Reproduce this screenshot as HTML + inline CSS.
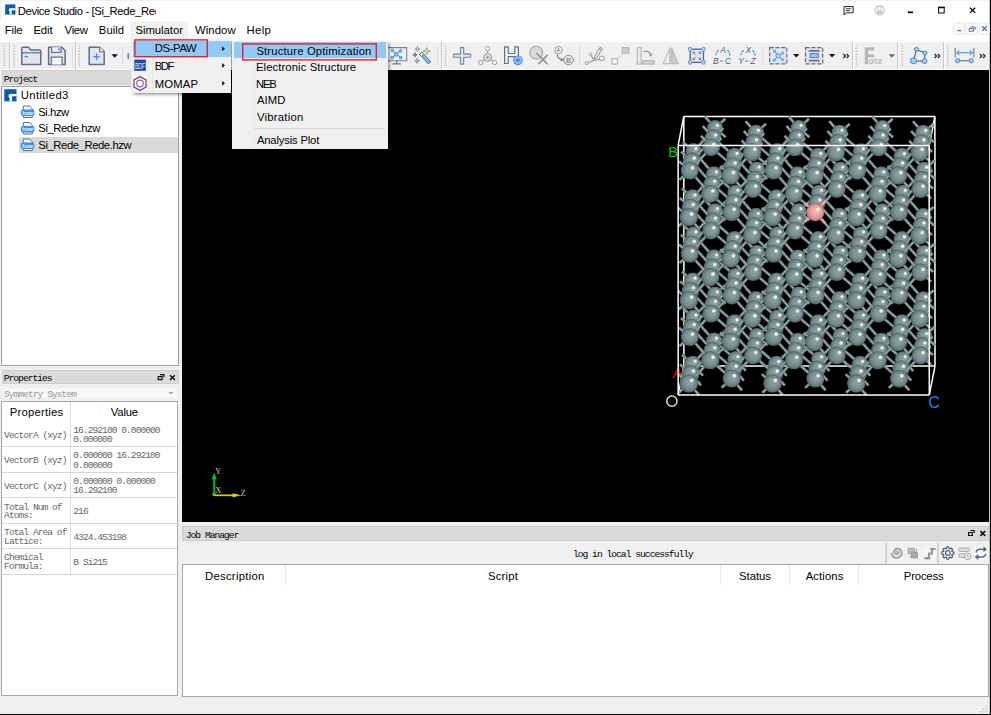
<!DOCTYPE html><html><head><meta charset="utf-8"><title>Device Studio</title><style>
*{margin:0;padding:0;box-sizing:border-box}
html,body{width:991px;height:715px;overflow:hidden;background:#f0f0f0}
body{position:relative;font-family:"Liberation Sans",sans-serif;font-size:11.3px;color:#000}
.a{position:absolute}
.t{position:absolute;white-space:nowrap;line-height:1}
.m{position:absolute;white-space:nowrap;line-height:1;font-family:"Liberation Mono",monospace;font-size:9.6px;letter-spacing:-0.96px;color:#000}
svg{position:absolute;left:0;top:0;overflow:visible}
</style></head><body>
<div class="a" style="left:0;top:0;width:990px;height:42px;background:#fff"></div>
<div class="a" style="left:130px;top:21px;width:58px;height:19px;background:#f2f2f2"></div>
<div class="a" style="left:0;top:0;width:990px;height:1px;background:#f1f1f1"></div><div class="a" style="left:0;top:0;width:1px;height:20px;background:#efefef"></div>
<div class="a" style="left:0;top:0;width:156px;height:22px;overflow:hidden"><div class="t" style="left:17.70px;top:5.60px;font-size:11.30px;letter-spacing:-0.368px;color:#000;">Device Studio - [Si_Rede_Rede</div></div>
<div class="t" style="left:4.70px;top:24.60px;font-size:11.30px;letter-spacing:-0.079px;color:#000;">File</div>
<div class="t" style="left:33.40px;top:24.60px;font-size:11.30px;letter-spacing:-0.111px;color:#000;">Edit</div>
<div class="t" style="left:64.60px;top:24.60px;font-size:11.30px;letter-spacing:-0.298px;color:#000;">View</div>
<div class="t" style="left:98.80px;top:24.60px;font-size:11.30px;letter-spacing:0.060px;color:#000;">Build</div>
<div class="t" style="left:135.49px;top:24.60px;font-size:11.30px;letter-spacing:-0.033px;color:#000;">Simulator</div>
<div class="t" style="left:195.00px;top:24.60px;font-size:11.30px;letter-spacing:0.094px;color:#000;">Window</div>
<div class="t" style="left:246.50px;top:24.60px;font-size:11.30px;letter-spacing:0.378px;color:#000;">Help</div>
<div class="a" style="left:2px;top:70px;width:176px;height:15px;background:#dadada;border:1px solid #cdcdcd"></div>
<div class="m" style="left:3.70px;top:74.95px;color:#000">Project</div>
<div class="a" style="left:1px;top:86px;width:178px;height:280px;background:#fff;border:1px solid #98a0ac"></div>
<div class="a" style="left:19px;top:137px;width:159px;height:16px;background:#d9d9d9"></div>
<div class="t" style="left:20.75px;top:89.60px;font-size:11.30px;letter-spacing:0.378px;color:#000;">Untitled3</div>
<div class="t" style="left:38.29px;top:106.60px;font-size:11.30px;letter-spacing:-0.465px;color:#000;">Si.hzw</div>
<div class="t" style="left:38.29px;top:122.60px;font-size:11.30px;letter-spacing:-0.441px;color:#000;">Si_Rede.hzw</div>
<div class="t" style="left:38.29px;top:139.60px;font-size:11.30px;letter-spacing:-0.432px;color:#000;">Si_Rede_Rede.hzw</div>
<div class="a" style="left:2px;top:370px;width:177px;height:14px;background:#dadada;border:1px solid #cfcfcf"></div>
<div class="m" style="left:3.70px;top:373.95px;color:#000">Properties</div>
<div class="a" style="left:2px;top:387px;width:176px;height:12px;background:#f8f8f8;border:1px solid #ededed;border-radius:2px"></div>
<div class="m" style="left:4.00px;top:389.95px;color:#989898">Symmetry System</div>
<div class="a" style="left:1px;top:401px;width:177px;height:295px;background:#fff;border:1px solid #a2a8b2"></div>
<div class="a" style="left:70px;top:402px;width:1px;height:172px;background:#dedede"></div>
<div class="a" style="left:2px;top:446px;width:175px;height:1px;background:#d6d6d6"></div>
<div class="a" style="left:2px;top:472px;width:175px;height:1px;background:#d6d6d6"></div>
<div class="a" style="left:2px;top:497px;width:175px;height:1px;background:#d6d6d6"></div>
<div class="a" style="left:2px;top:523px;width:175px;height:1px;background:#d6d6d6"></div>
<div class="a" style="left:2px;top:548px;width:175px;height:1px;background:#d6d6d6"></div>
<div class="a" style="left:2px;top:574px;width:175px;height:1px;background:#d6d6d6"></div>
<div class="t" style="left:9.80px;top:406.60px;font-size:11.30px;letter-spacing:0.208px;color:#000;">Properties</div>
<div class="t" style="left:110.80px;top:406.60px;font-size:11.30px;letter-spacing:-0.193px;color:#000;">Value</div>
<div class="m" style="left:4.10px;top:430.95px;color:#686868">VectorA (xyz)</div>
<div class="m" style="left:73.30px;top:425.95px;color:#686868">16.292100 0.000000</div>
<div class="m" style="left:73.30px;top:434.95px;color:#686868">0.000000</div>
<div class="m" style="left:4.10px;top:455.95px;color:#686868">VectorB (xyz)</div>
<div class="m" style="left:73.30px;top:450.95px;color:#686868">0.000000 16.292100</div>
<div class="m" style="left:73.30px;top:460.95px;color:#686868">0.000000</div>
<div class="m" style="left:4.10px;top:481.95px;color:#686868">VectorC (xyz)</div>
<div class="m" style="left:73.30px;top:476.95px;color:#686868">0.000000 0.000000</div>
<div class="m" style="left:73.30px;top:485.95px;color:#686868">16.292100</div>
<div class="m" style="left:4.10px;top:502.95px;color:#686868">Total Num of</div>
<div class="m" style="left:4.10px;top:510.95px;color:#686868">Atoms:</div>
<div class="m" style="left:73.30px;top:506.95px;color:#686868">216</div>
<div class="m" style="left:4.10px;top:527.95px;color:#686868">Total Area of</div>
<div class="m" style="left:4.10px;top:536.95px;color:#686868">Lattice:</div>
<div class="m" style="left:73.30px;top:532.95px;color:#686868">4324.453198</div>
<div class="m" style="left:4.10px;top:552.95px;color:#686868">Chemical</div>
<div class="m" style="left:4.10px;top:561.95px;color:#686868">Formula:</div>
<div class="m" style="left:73.30px;top:557.95px;color:#686868">B Si215</div>
<div class="a" style="left:0;top:68.6px;width:989px;height:1px;background:#fafafa"></div><div class="a" style="left:182.2px;top:69.5px;width:806.8px;height:452.2px;background:#000"></div>
<div class="a" style="left:182px;top:526px;width:807px;height:15px;background:#dadada;border:1px solid #cdcdcd"></div>
<div class="m" style="left:185.70px;top:530.95px;color:#000">Job Manager</div>
<div class="m" style="left:572.90px;top:549.95px;color:#000">log in local successfully</div>
<div class="a" style="left:182px;top:564px;width:807px;height:133px;background:#fff;border:1px solid #a2a8b2"></div>
<div class="a" style="left:285px;top:565px;width:1px;height:20px;background:#e8e8e8"></div>
<div class="a" style="left:720px;top:565px;width:1px;height:20px;background:#e8e8e8"></div>
<div class="a" style="left:789px;top:565px;width:1px;height:20px;background:#e8e8e8"></div>
<div class="a" style="left:858px;top:565px;width:1px;height:20px;background:#e8e8e8"></div>
<div class="t" style="left:205.00px;top:570.60px;font-size:11.30px;letter-spacing:0.278px;color:#000;">Description</div>
<div class="t" style="left:487.99px;top:570.60px;font-size:11.30px;letter-spacing:0.227px;color:#000;">Script</div>
<div class="t" style="left:739.09px;top:570.60px;font-size:11.30px;letter-spacing:-0.046px;color:#000;">Status</div>
<div class="t" style="left:805.70px;top:570.60px;font-size:11.30px;letter-spacing:0.105px;color:#000;">Actions</div>
<div class="t" style="left:903.80px;top:570.60px;font-size:11.30px;letter-spacing:-0.166px;color:#000;">Process</div>
<div class="a" style="left:989px;top:0;width:1px;height:715px;background:#c4c4c4"></div>
<div class="a" style="left:990px;top:0;width:1px;height:715px;background:#0a0a0a"></div>
<div class="a" style="left:0;top:713.7px;width:991px;height:1.3px;background:#0a0a0a"></div>
<svg width="991" height="715" viewBox="0 0 991 715">
<defs>
<radialGradient id="gs" cx="0.5" cy="0.5" r="0.5" fx="0.6" fy="0.4"><stop offset="0" stop-color="#8ea4a4"/><stop offset="0.45" stop-color="#819797"/><stop offset="0.75" stop-color="#6f8484"/><stop offset="0.92" stop-color="#586969"/><stop offset="1" stop-color="#465555"/></radialGradient>
<radialGradient id="gb" cx="0.5" cy="0.5" r="0.5" fx="0.6" fy="0.4"><stop offset="0" stop-color="#fab8b8"/><stop offset="0.45" stop-color="#f0a8a8"/><stop offset="0.75" stop-color="#dc9696"/><stop offset="0.92" stop-color="#b87a7a"/><stop offset="1" stop-color="#966060"/></radialGradient>
<radialGradient id="gh"><stop offset="0" stop-color="#fff"/><stop offset="0.35" stop-color="#fff" stop-opacity="0.95"/><stop offset="1" stop-color="#fff" stop-opacity="0"/></radialGradient>
<g id="s"><circle r="10" fill="url(#gs)"/><circle cx="3" cy="-3.2" r="2.7" fill="url(#gh)"/></g>
<g id="sb"><circle r="10" fill="url(#gb)"/><circle cx="3" cy="-3.2" r="2.7" fill="url(#gh)"/></g>
<g id="b1" fill="none"><path d="M0 0l10.70 -11.60M0 0l-10.22 9.18M0 0l-10.70 -9.20M0 0l10.23 11.62" stroke="#5d7070" stroke-width="2.9"/><path d="M0 0l10.70 -11.60M0 0l-10.22 9.18M0 0l-10.70 -9.20M0 0l10.23 11.62" stroke="#94aaaa" stroke-width="1.5"/></g>
<g id="b2" fill="none"><path d="M0 0l-10.70 11.60M0 0l10.22 -9.18M0 0l10.70 9.20M0 0l-10.23 -11.62" stroke="#5d7070" stroke-width="2.9"/><path d="M0 0l-10.70 11.60M0 0l10.22 -9.18M0 0l10.70 9.20M0 0l-10.23 -11.62" stroke="#94aaaa" stroke-width="1.5"/></g>
<g id="bb" fill="none"><path d="M0 0l10.70 -11.60M0 0l-10.22 9.18M0 0l-10.70 -9.20M0 0l10.23 11.62" stroke="#c88686" stroke-width="2.9"/><path d="M0 0l10.70 -11.60M0 0l-10.22 9.18M0 0l-10.70 -9.20M0 0l10.23 11.62" stroke="#f6b0b0" stroke-width="1.5"/></g>
</defs>
<path d="M683.9 366.0 L683.8 116.4" stroke="#fff" stroke-width="1.5" fill="none"/>
<path d="M683.9 366.0 L935.0 366.1" stroke="#fff" stroke-width="1.5" fill="none"/>
<path d="M683.8 116.4 L934.9 116.5" stroke="#fff" stroke-width="1.5" fill="none"/>
<path d="M935.0 366.1 L934.9 116.5" stroke="#fff" stroke-width="1.5" fill="none"/>
<path d="M678.2 395.0 L683.9 366.0" stroke="#fff" stroke-width="1.5" fill="none"/>
<path d="M678.1 145.4 L683.8 116.4" stroke="#fff" stroke-width="1.5" fill="none"/>
<path d="M929.3 395.1 L935.0 366.1" stroke="#fff" stroke-width="1.5" fill="none"/>
<path d="M929.2 145.5 L934.9 116.5" stroke="#fff" stroke-width="1.5" fill="none"/>
<text x="672.4" y="377.5" font-family="Liberation Sans" font-size="15.4" fill="#e60000">A</text>
<use href="#b2" x="756.9" y="336.0"/>
<use href="#s" transform="translate(756.9 336.0) scale(0.801)"/>
<use href="#b2" x="840.6" y="336.1"/>
<use href="#s" transform="translate(840.6 336.1) scale(0.801)"/>
<use href="#b2" x="924.3" y="336.1"/>
<use href="#s" transform="translate(924.3 336.1) scale(0.801)"/>
<use href="#b2" x="715.0" y="294.4"/>
<use href="#s" transform="translate(715.0 294.4) scale(0.801)"/>
<use href="#b2" x="798.7" y="294.4"/>
<use href="#s" transform="translate(798.7 294.4) scale(0.801)"/>
<use href="#b2" x="882.4" y="294.5"/>
<use href="#s" transform="translate(882.4 294.5) scale(0.801)"/>
<use href="#b2" x="756.9" y="252.8"/>
<use href="#s" transform="translate(756.9 252.8) scale(0.801)"/>
<use href="#b2" x="840.6" y="252.9"/>
<use href="#s" transform="translate(840.6 252.9) scale(0.801)"/>
<use href="#b2" x="924.3" y="252.9"/>
<use href="#s" transform="translate(924.3 252.9) scale(0.801)"/>
<use href="#b2" x="715.0" y="211.2"/>
<use href="#s" transform="translate(715.0 211.2) scale(0.801)"/>
<use href="#b2" x="798.7" y="211.2"/>
<use href="#s" transform="translate(798.7 211.2) scale(0.801)"/>
<use href="#b2" x="882.4" y="211.3"/>
<use href="#s" transform="translate(882.4 211.3) scale(0.801)"/>
<use href="#b2" x="756.8" y="169.6"/>
<use href="#s" transform="translate(756.8 169.6) scale(0.801)"/>
<use href="#b2" x="840.5" y="169.7"/>
<use href="#s" transform="translate(840.5 169.7) scale(0.801)"/>
<use href="#b2" x="924.2" y="169.7"/>
<use href="#s" transform="translate(924.2 169.7) scale(0.801)"/>
<use href="#b2" x="715.0" y="128.0"/>
<use href="#s" transform="translate(715.0 128.0) scale(0.801)"/>
<use href="#b2" x="798.7" y="128.0"/>
<use href="#s" transform="translate(798.7 128.0) scale(0.801)"/>
<use href="#b2" x="882.4" y="128.1"/>
<use href="#s" transform="translate(882.4 128.1) scale(0.801)"/>
<use href="#b1" x="735.5" y="359.2"/>
<use href="#s" transform="translate(735.5 359.2) scale(0.812)"/>
<use href="#b1" x="819.2" y="359.3"/>
<use href="#s" transform="translate(819.2 359.3) scale(0.812)"/>
<use href="#b1" x="902.9" y="359.3"/>
<use href="#s" transform="translate(902.9 359.3) scale(0.812)"/>
<use href="#b1" x="693.6" y="317.6"/>
<use href="#s" transform="translate(693.6 317.6) scale(0.812)"/>
<use href="#b1" x="777.3" y="317.6"/>
<use href="#s" transform="translate(777.3 317.6) scale(0.812)"/>
<use href="#b1" x="861.0" y="317.7"/>
<use href="#s" transform="translate(861.0 317.7) scale(0.812)"/>
<use href="#b1" x="735.5" y="276.0"/>
<use href="#s" transform="translate(735.5 276.0) scale(0.812)"/>
<use href="#b1" x="819.2" y="276.1"/>
<use href="#s" transform="translate(819.2 276.1) scale(0.812)"/>
<use href="#b1" x="902.9" y="276.1"/>
<use href="#s" transform="translate(902.9 276.1) scale(0.812)"/>
<use href="#b1" x="693.6" y="234.4"/>
<use href="#s" transform="translate(693.6 234.4) scale(0.812)"/>
<use href="#b1" x="777.3" y="234.4"/>
<use href="#s" transform="translate(777.3 234.4) scale(0.812)"/>
<use href="#b1" x="861.0" y="234.5"/>
<use href="#s" transform="translate(861.0 234.5) scale(0.812)"/>
<use href="#b1" x="735.4" y="192.8"/>
<use href="#s" transform="translate(735.4 192.8) scale(0.812)"/>
<use href="#b1" x="819.1" y="192.9"/>
<use href="#s" transform="translate(819.1 192.9) scale(0.812)"/>
<use href="#b1" x="902.8" y="192.9"/>
<use href="#s" transform="translate(902.8 192.9) scale(0.812)"/>
<use href="#b1" x="693.6" y="151.2"/>
<use href="#s" transform="translate(693.6 151.2) scale(0.812)"/>
<use href="#b1" x="777.3" y="151.2"/>
<use href="#s" transform="translate(777.3 151.2) scale(0.812)"/>
<use href="#b1" x="861.0" y="151.3"/>
<use href="#s" transform="translate(861.0 151.3) scale(0.812)"/>
<use href="#b2" x="714.1" y="340.8"/>
<use href="#s" transform="translate(714.1 340.8) scale(0.823)"/>
<use href="#b2" x="797.8" y="340.9"/>
<use href="#s" transform="translate(797.8 340.9) scale(0.823)"/>
<use href="#b2" x="881.5" y="340.9"/>
<use href="#s" transform="translate(881.5 340.9) scale(0.823)"/>
<use href="#b2" x="755.9" y="299.3"/>
<use href="#s" transform="translate(755.9 299.3) scale(0.823)"/>
<use href="#b2" x="839.6" y="299.3"/>
<use href="#s" transform="translate(839.6 299.3) scale(0.823)"/>
<use href="#b2" x="923.3" y="299.4"/>
<use href="#s" transform="translate(923.3 299.4) scale(0.823)"/>
<use href="#b2" x="714.1" y="257.6"/>
<use href="#s" transform="translate(714.1 257.6) scale(0.823)"/>
<use href="#b2" x="797.8" y="257.7"/>
<use href="#s" transform="translate(797.8 257.7) scale(0.823)"/>
<use href="#b2" x="881.5" y="257.7"/>
<use href="#s" transform="translate(881.5 257.7) scale(0.823)"/>
<use href="#b2" x="755.9" y="216.1"/>
<use href="#s" transform="translate(755.9 216.1) scale(0.823)"/>
<use href="#b2" x="839.6" y="216.1"/>
<use href="#s" transform="translate(839.6 216.1) scale(0.823)"/>
<use href="#b2" x="923.3" y="216.2"/>
<use href="#s" transform="translate(923.3 216.2) scale(0.823)"/>
<use href="#b2" x="714.0" y="174.4"/>
<use href="#s" transform="translate(714.0 174.4) scale(0.823)"/>
<use href="#b2" x="797.7" y="174.5"/>
<use href="#s" transform="translate(797.7 174.5) scale(0.823)"/>
<use href="#b2" x="881.4" y="174.5"/>
<use href="#s" transform="translate(881.4 174.5) scale(0.823)"/>
<use href="#b2" x="755.9" y="132.9"/>
<use href="#s" transform="translate(755.9 132.9) scale(0.823)"/>
<use href="#b2" x="839.6" y="132.9"/>
<use href="#s" transform="translate(839.6 132.9) scale(0.823)"/>
<use href="#b2" x="923.3" y="133.0"/>
<use href="#s" transform="translate(923.3 133.0) scale(0.823)"/>
<use href="#b1" x="692.7" y="364.0"/>
<use href="#s" transform="translate(692.7 364.0) scale(0.834)"/>
<use href="#b1" x="776.4" y="364.1"/>
<use href="#s" transform="translate(776.4 364.1) scale(0.834)"/>
<use href="#b1" x="860.1" y="364.1"/>
<use href="#s" transform="translate(860.1 364.1) scale(0.834)"/>
<use href="#b1" x="734.5" y="322.5"/>
<use href="#s" transform="translate(734.5 322.5) scale(0.834)"/>
<use href="#b1" x="818.2" y="322.5"/>
<use href="#s" transform="translate(818.2 322.5) scale(0.834)"/>
<use href="#b1" x="901.9" y="322.6"/>
<use href="#s" transform="translate(901.9 322.6) scale(0.834)"/>
<use href="#b1" x="692.7" y="280.8"/>
<use href="#s" transform="translate(692.7 280.8) scale(0.834)"/>
<use href="#b1" x="776.4" y="280.9"/>
<use href="#s" transform="translate(776.4 280.9) scale(0.834)"/>
<use href="#b1" x="860.1" y="280.9"/>
<use href="#s" transform="translate(860.1 280.9) scale(0.834)"/>
<use href="#b1" x="734.5" y="239.3"/>
<use href="#s" transform="translate(734.5 239.3) scale(0.834)"/>
<use href="#b1" x="818.2" y="239.3"/>
<use href="#s" transform="translate(818.2 239.3) scale(0.834)"/>
<use href="#b1" x="901.9" y="239.4"/>
<use href="#s" transform="translate(901.9 239.4) scale(0.834)"/>
<use href="#b1" x="692.6" y="197.6"/>
<use href="#s" transform="translate(692.6 197.6) scale(0.834)"/>
<use href="#b1" x="776.3" y="197.7"/>
<use href="#s" transform="translate(776.3 197.7) scale(0.834)"/>
<use href="#b1" x="860.0" y="197.7"/>
<use href="#s" transform="translate(860.0 197.7) scale(0.834)"/>
<use href="#b1" x="734.5" y="156.1"/>
<use href="#s" transform="translate(734.5 156.1) scale(0.834)"/>
<use href="#b1" x="818.2" y="156.1"/>
<use href="#s" transform="translate(818.2 156.1) scale(0.834)"/>
<use href="#b1" x="901.9" y="156.2"/>
<use href="#s" transform="translate(901.9 156.2) scale(0.834)"/>
<use href="#b2" x="755.0" y="345.7"/>
<use href="#s" transform="translate(755.0 345.7) scale(0.846)"/>
<use href="#b2" x="838.7" y="345.7"/>
<use href="#s" transform="translate(838.7 345.7) scale(0.846)"/>
<use href="#b2" x="922.4" y="345.8"/>
<use href="#s" transform="translate(922.4 345.8) scale(0.846)"/>
<use href="#b2" x="713.1" y="304.1"/>
<use href="#s" transform="translate(713.1 304.1) scale(0.846)"/>
<use href="#b2" x="796.8" y="304.1"/>
<use href="#s" transform="translate(796.8 304.1) scale(0.846)"/>
<use href="#b2" x="880.5" y="304.2"/>
<use href="#s" transform="translate(880.5 304.2) scale(0.846)"/>
<use href="#b2" x="755.0" y="262.5"/>
<use href="#s" transform="translate(755.0 262.5) scale(0.846)"/>
<use href="#b2" x="838.7" y="262.5"/>
<use href="#s" transform="translate(838.7 262.5) scale(0.846)"/>
<use href="#b2" x="922.4" y="262.6"/>
<use href="#s" transform="translate(922.4 262.6) scale(0.846)"/>
<use href="#b2" x="713.1" y="220.9"/>
<use href="#s" transform="translate(713.1 220.9) scale(0.846)"/>
<use href="#b2" x="796.8" y="220.9"/>
<use href="#s" transform="translate(796.8 220.9) scale(0.846)"/>
<use href="#b2" x="880.5" y="221.0"/>
<use href="#s" transform="translate(880.5 221.0) scale(0.846)"/>
<use href="#b2" x="754.9" y="179.3"/>
<use href="#s" transform="translate(754.9 179.3) scale(0.846)"/>
<use href="#b2" x="838.6" y="179.3"/>
<use href="#s" transform="translate(838.6 179.3) scale(0.846)"/>
<use href="#b2" x="922.3" y="179.4"/>
<use href="#s" transform="translate(922.3 179.4) scale(0.846)"/>
<use href="#b2" x="713.1" y="137.7"/>
<use href="#s" transform="translate(713.1 137.7) scale(0.846)"/>
<use href="#b2" x="796.8" y="137.7"/>
<use href="#s" transform="translate(796.8 137.7) scale(0.846)"/>
<use href="#b2" x="880.5" y="137.8"/>
<use href="#s" transform="translate(880.5 137.8) scale(0.846)"/>
<use href="#b1" x="733.6" y="368.9"/>
<use href="#s" transform="translate(733.6 368.9) scale(0.857)"/>
<use href="#b1" x="817.3" y="369.0"/>
<use href="#s" transform="translate(817.3 369.0) scale(0.857)"/>
<use href="#b1" x="901.0" y="369.0"/>
<use href="#s" transform="translate(901.0 369.0) scale(0.857)"/>
<use href="#b1" x="691.7" y="327.3"/>
<use href="#s" transform="translate(691.7 327.3) scale(0.857)"/>
<use href="#b1" x="775.4" y="327.3"/>
<use href="#s" transform="translate(775.4 327.3) scale(0.857)"/>
<use href="#b1" x="859.1" y="327.4"/>
<use href="#s" transform="translate(859.1 327.4) scale(0.857)"/>
<use href="#b1" x="733.6" y="285.7"/>
<use href="#s" transform="translate(733.6 285.7) scale(0.857)"/>
<use href="#b1" x="817.3" y="285.8"/>
<use href="#s" transform="translate(817.3 285.8) scale(0.857)"/>
<use href="#b1" x="901.0" y="285.8"/>
<use href="#s" transform="translate(901.0 285.8) scale(0.857)"/>
<use href="#b1" x="691.7" y="244.1"/>
<use href="#s" transform="translate(691.7 244.1) scale(0.857)"/>
<use href="#b1" x="775.4" y="244.1"/>
<use href="#s" transform="translate(775.4 244.1) scale(0.857)"/>
<use href="#b1" x="859.1" y="244.2"/>
<use href="#s" transform="translate(859.1 244.2) scale(0.857)"/>
<use href="#b1" x="733.5" y="202.5"/>
<use href="#s" transform="translate(733.5 202.5) scale(0.857)"/>
<use href="#b1" x="817.2" y="202.6"/>
<use href="#s" transform="translate(817.2 202.6) scale(0.857)"/>
<use href="#b1" x="900.9" y="202.6"/>
<use href="#s" transform="translate(900.9 202.6) scale(0.857)"/>
<use href="#b1" x="691.7" y="160.9"/>
<use href="#s" transform="translate(691.7 160.9) scale(0.857)"/>
<use href="#b1" x="775.4" y="160.9"/>
<use href="#s" transform="translate(775.4 160.9) scale(0.857)"/>
<use href="#b1" x="859.1" y="161.0"/>
<use href="#s" transform="translate(859.1 161.0) scale(0.857)"/>
<use href="#b2" x="712.2" y="350.5"/>
<use href="#s" transform="translate(712.2 350.5) scale(0.868)"/>
<use href="#b2" x="795.9" y="350.6"/>
<use href="#s" transform="translate(795.9 350.6) scale(0.868)"/>
<use href="#b2" x="879.6" y="350.6"/>
<use href="#s" transform="translate(879.6 350.6) scale(0.868)"/>
<use href="#b2" x="754.0" y="308.9"/>
<use href="#s" transform="translate(754.0 308.9) scale(0.868)"/>
<use href="#b2" x="837.7" y="309.0"/>
<use href="#s" transform="translate(837.7 309.0) scale(0.868)"/>
<use href="#b2" x="921.4" y="309.0"/>
<use href="#s" transform="translate(921.4 309.0) scale(0.868)"/>
<use href="#b2" x="712.2" y="267.3"/>
<use href="#s" transform="translate(712.2 267.3) scale(0.868)"/>
<use href="#b2" x="795.9" y="267.4"/>
<use href="#s" transform="translate(795.9 267.4) scale(0.868)"/>
<use href="#b2" x="879.6" y="267.4"/>
<use href="#s" transform="translate(879.6 267.4) scale(0.868)"/>
<use href="#b2" x="754.0" y="225.7"/>
<use href="#s" transform="translate(754.0 225.7) scale(0.868)"/>
<use href="#b2" x="837.7" y="225.8"/>
<use href="#s" transform="translate(837.7 225.8) scale(0.868)"/>
<use href="#b2" x="921.4" y="225.8"/>
<use href="#s" transform="translate(921.4 225.8) scale(0.868)"/>
<use href="#b2" x="712.1" y="184.1"/>
<use href="#s" transform="translate(712.1 184.1) scale(0.868)"/>
<use href="#b2" x="795.8" y="184.2"/>
<use href="#s" transform="translate(795.8 184.2) scale(0.868)"/>
<use href="#b2" x="879.5" y="184.2"/>
<use href="#s" transform="translate(879.5 184.2) scale(0.868)"/>
<use href="#b2" x="754.0" y="142.5"/>
<use href="#s" transform="translate(754.0 142.5) scale(0.868)"/>
<use href="#b2" x="837.7" y="142.6"/>
<use href="#s" transform="translate(837.7 142.6) scale(0.868)"/>
<use href="#b2" x="921.4" y="142.6"/>
<use href="#s" transform="translate(921.4 142.6) scale(0.868)"/>
<use href="#b1" x="690.8" y="373.7"/>
<use href="#s" transform="translate(690.8 373.7) scale(0.879)"/>
<use href="#b1" x="774.5" y="373.8"/>
<use href="#s" transform="translate(774.5 373.8) scale(0.879)"/>
<use href="#b1" x="858.2" y="373.8"/>
<use href="#s" transform="translate(858.2 373.8) scale(0.879)"/>
<use href="#b1" x="732.6" y="332.1"/>
<use href="#s" transform="translate(732.6 332.1) scale(0.879)"/>
<use href="#b1" x="816.3" y="332.2"/>
<use href="#s" transform="translate(816.3 332.2) scale(0.879)"/>
<use href="#b1" x="900.0" y="332.2"/>
<use href="#s" transform="translate(900.0 332.2) scale(0.879)"/>
<use href="#b1" x="690.8" y="290.5"/>
<use href="#s" transform="translate(690.8 290.5) scale(0.879)"/>
<use href="#b1" x="774.5" y="290.6"/>
<use href="#s" transform="translate(774.5 290.6) scale(0.879)"/>
<use href="#b1" x="858.2" y="290.6"/>
<use href="#s" transform="translate(858.2 290.6) scale(0.879)"/>
<use href="#b1" x="732.6" y="248.9"/>
<use href="#s" transform="translate(732.6 248.9) scale(0.879)"/>
<use href="#b1" x="816.3" y="249.0"/>
<use href="#s" transform="translate(816.3 249.0) scale(0.879)"/>
<use href="#b1" x="900.0" y="249.0"/>
<use href="#s" transform="translate(900.0 249.0) scale(0.879)"/>
<use href="#b1" x="690.7" y="207.3"/>
<use href="#s" transform="translate(690.7 207.3) scale(0.879)"/>
<use href="#b1" x="774.4" y="207.4"/>
<use href="#s" transform="translate(774.4 207.4) scale(0.879)"/>
<use href="#b1" x="858.1" y="207.4"/>
<use href="#s" transform="translate(858.1 207.4) scale(0.879)"/>
<use href="#b1" x="732.6" y="165.7"/>
<use href="#s" transform="translate(732.6 165.7) scale(0.879)"/>
<use href="#b1" x="816.3" y="165.8"/>
<use href="#s" transform="translate(816.3 165.8) scale(0.879)"/>
<use href="#b1" x="900.0" y="165.8"/>
<use href="#s" transform="translate(900.0 165.8) scale(0.879)"/>
<use href="#b2" x="753.1" y="355.4"/>
<use href="#s" transform="translate(753.1 355.4) scale(0.891)"/>
<use href="#b2" x="836.8" y="355.4"/>
<use href="#s" transform="translate(836.8 355.4) scale(0.891)"/>
<use href="#b2" x="920.5" y="355.5"/>
<use href="#s" transform="translate(920.5 355.5) scale(0.891)"/>
<use href="#b2" x="711.2" y="313.7"/>
<use href="#s" transform="translate(711.2 313.7) scale(0.891)"/>
<use href="#b2" x="794.9" y="313.8"/>
<use href="#s" transform="translate(794.9 313.8) scale(0.891)"/>
<use href="#b2" x="878.6" y="313.8"/>
<use href="#s" transform="translate(878.6 313.8) scale(0.891)"/>
<use href="#b2" x="753.1" y="272.2"/>
<use href="#s" transform="translate(753.1 272.2) scale(0.891)"/>
<use href="#b2" x="836.8" y="272.2"/>
<use href="#s" transform="translate(836.8 272.2) scale(0.891)"/>
<use href="#b2" x="920.5" y="272.3"/>
<use href="#s" transform="translate(920.5 272.3) scale(0.891)"/>
<use href="#b2" x="711.2" y="230.5"/>
<use href="#s" transform="translate(711.2 230.5) scale(0.891)"/>
<use href="#b2" x="794.9" y="230.6"/>
<use href="#s" transform="translate(794.9 230.6) scale(0.891)"/>
<use href="#b2" x="878.6" y="230.6"/>
<use href="#s" transform="translate(878.6 230.6) scale(0.891)"/>
<use href="#b2" x="753.0" y="189.0"/>
<use href="#s" transform="translate(753.0 189.0) scale(0.891)"/>
<use href="#b2" x="836.7" y="189.0"/>
<use href="#s" transform="translate(836.7 189.0) scale(0.891)"/>
<use href="#b2" x="920.4" y="189.1"/>
<use href="#s" transform="translate(920.4 189.1) scale(0.891)"/>
<use href="#b2" x="711.2" y="147.3"/>
<use href="#s" transform="translate(711.2 147.3) scale(0.891)"/>
<use href="#b2" x="794.9" y="147.4"/>
<use href="#s" transform="translate(794.9 147.4) scale(0.891)"/>
<use href="#b2" x="878.6" y="147.4"/>
<use href="#s" transform="translate(878.6 147.4) scale(0.891)"/>
<use href="#b1" x="731.7" y="378.6"/>
<use href="#s" transform="translate(731.7 378.6) scale(0.902)"/>
<use href="#b1" x="815.4" y="378.6"/>
<use href="#s" transform="translate(815.4 378.6) scale(0.902)"/>
<use href="#b1" x="899.1" y="378.7"/>
<use href="#s" transform="translate(899.1 378.7) scale(0.902)"/>
<use href="#b1" x="689.8" y="337.0"/>
<use href="#s" transform="translate(689.8 337.0) scale(0.902)"/>
<use href="#b1" x="773.5" y="337.0"/>
<use href="#s" transform="translate(773.5 337.0) scale(0.902)"/>
<use href="#b1" x="857.2" y="337.1"/>
<use href="#s" transform="translate(857.2 337.1) scale(0.902)"/>
<use href="#b1" x="731.7" y="295.4"/>
<use href="#s" transform="translate(731.7 295.4) scale(0.902)"/>
<use href="#b1" x="815.4" y="295.4"/>
<use href="#s" transform="translate(815.4 295.4) scale(0.902)"/>
<use href="#b1" x="899.1" y="295.5"/>
<use href="#s" transform="translate(899.1 295.5) scale(0.902)"/>
<use href="#b1" x="689.8" y="253.8"/>
<use href="#s" transform="translate(689.8 253.8) scale(0.902)"/>
<use href="#b1" x="773.5" y="253.8"/>
<use href="#s" transform="translate(773.5 253.8) scale(0.902)"/>
<use href="#b1" x="857.2" y="253.9"/>
<use href="#s" transform="translate(857.2 253.9) scale(0.902)"/>
<use href="#b1" x="731.6" y="212.2"/>
<use href="#s" transform="translate(731.6 212.2) scale(0.902)"/>
<use href="#bb" x="815.3" y="212.2"/>
<use href="#sb" transform="translate(815.3 212.2) scale(0.902)"/>
<use href="#b1" x="899.0" y="212.3"/>
<use href="#s" transform="translate(899.0 212.3) scale(0.902)"/>
<use href="#b1" x="689.8" y="170.6"/>
<use href="#s" transform="translate(689.8 170.6) scale(0.902)"/>
<use href="#b1" x="773.5" y="170.6"/>
<use href="#s" transform="translate(773.5 170.6) scale(0.902)"/>
<use href="#b1" x="857.2" y="170.7"/>
<use href="#s" transform="translate(857.2 170.7) scale(0.902)"/>
<use href="#b2" x="710.3" y="360.2"/>
<use href="#s" transform="translate(710.3 360.2) scale(0.913)"/>
<use href="#b2" x="794.0" y="360.2"/>
<use href="#s" transform="translate(794.0 360.2) scale(0.913)"/>
<use href="#b2" x="877.7" y="360.3"/>
<use href="#s" transform="translate(877.7 360.3) scale(0.913)"/>
<use href="#b2" x="752.1" y="318.6"/>
<use href="#s" transform="translate(752.1 318.6) scale(0.913)"/>
<use href="#b2" x="835.8" y="318.7"/>
<use href="#s" transform="translate(835.8 318.7) scale(0.913)"/>
<use href="#b2" x="919.5" y="318.7"/>
<use href="#s" transform="translate(919.5 318.7) scale(0.913)"/>
<use href="#b2" x="710.3" y="277.0"/>
<use href="#s" transform="translate(710.3 277.0) scale(0.913)"/>
<use href="#b2" x="794.0" y="277.0"/>
<use href="#s" transform="translate(794.0 277.0) scale(0.913)"/>
<use href="#b2" x="877.7" y="277.1"/>
<use href="#s" transform="translate(877.7 277.1) scale(0.913)"/>
<use href="#b2" x="752.1" y="235.4"/>
<use href="#s" transform="translate(752.1 235.4) scale(0.913)"/>
<use href="#b2" x="835.8" y="235.5"/>
<use href="#s" transform="translate(835.8 235.5) scale(0.913)"/>
<use href="#b2" x="919.5" y="235.5"/>
<use href="#s" transform="translate(919.5 235.5) scale(0.913)"/>
<use href="#b2" x="710.2" y="193.8"/>
<use href="#s" transform="translate(710.2 193.8) scale(0.913)"/>
<use href="#b2" x="793.9" y="193.8"/>
<use href="#s" transform="translate(793.9 193.8) scale(0.913)"/>
<use href="#b2" x="877.6" y="193.9"/>
<use href="#s" transform="translate(877.6 193.9) scale(0.913)"/>
<use href="#b2" x="752.1" y="152.2"/>
<use href="#s" transform="translate(752.1 152.2) scale(0.913)"/>
<use href="#b2" x="835.8" y="152.3"/>
<use href="#s" transform="translate(835.8 152.3) scale(0.913)"/>
<use href="#b2" x="919.5" y="152.3"/>
<use href="#s" transform="translate(919.5 152.3) scale(0.913)"/>
<use href="#b1" x="688.9" y="383.4"/>
<use href="#s" transform="translate(688.9 383.4) scale(0.924)"/>
<use href="#b1" x="772.6" y="383.4"/>
<use href="#s" transform="translate(772.6 383.4) scale(0.924)"/>
<use href="#b1" x="856.3" y="383.5"/>
<use href="#s" transform="translate(856.3 383.5) scale(0.924)"/>
<use href="#b1" x="730.7" y="341.8"/>
<use href="#s" transform="translate(730.7 341.8) scale(0.924)"/>
<use href="#b1" x="814.4" y="341.9"/>
<use href="#s" transform="translate(814.4 341.9) scale(0.924)"/>
<use href="#b1" x="898.1" y="341.9"/>
<use href="#s" transform="translate(898.1 341.9) scale(0.924)"/>
<use href="#b1" x="688.9" y="300.2"/>
<use href="#s" transform="translate(688.9 300.2) scale(0.924)"/>
<use href="#b1" x="772.6" y="300.2"/>
<use href="#s" transform="translate(772.6 300.2) scale(0.924)"/>
<use href="#b1" x="856.3" y="300.3"/>
<use href="#s" transform="translate(856.3 300.3) scale(0.924)"/>
<use href="#b1" x="730.7" y="258.6"/>
<use href="#s" transform="translate(730.7 258.6) scale(0.924)"/>
<use href="#b1" x="814.4" y="258.7"/>
<use href="#s" transform="translate(814.4 258.7) scale(0.924)"/>
<use href="#b1" x="898.1" y="258.7"/>
<use href="#s" transform="translate(898.1 258.7) scale(0.924)"/>
<use href="#b1" x="688.8" y="217.0"/>
<use href="#s" transform="translate(688.8 217.0) scale(0.924)"/>
<use href="#b1" x="772.5" y="217.0"/>
<use href="#s" transform="translate(772.5 217.0) scale(0.924)"/>
<use href="#b1" x="856.2" y="217.1"/>
<use href="#s" transform="translate(856.2 217.1) scale(0.924)"/>
<use href="#b1" x="730.7" y="175.4"/>
<use href="#s" transform="translate(730.7 175.4) scale(0.924)"/>
<use href="#b1" x="814.4" y="175.5"/>
<use href="#s" transform="translate(814.4 175.5) scale(0.924)"/>
<use href="#b1" x="898.1" y="175.5"/>
<use href="#s" transform="translate(898.1 175.5) scale(0.924)"/>
<path d="M678.2 395.0 L678.1 145.4" stroke="#fff" stroke-width="1.5" fill="none"/>
<path d="M678.2 395.0 L929.3 395.1" stroke="#fff" stroke-width="1.5" fill="none"/>
<path d="M678.1 145.4 L929.2 145.5" stroke="#fff" stroke-width="1.5" fill="none"/>
<path d="M929.3 395.1 L929.2 145.5" stroke="#fff" stroke-width="1.5" fill="none"/>
<text x="668.2" y="156.7" font-family="Liberation Sans" font-size="14.5" fill="#00c400">B</text>
<text x="928.4" y="407.7" font-family="Liberation Sans" font-size="15.8" fill="#1888f0">C</text>
<circle cx="671.9" cy="401.2" r="5.1" fill="none" stroke="#dcdcdc" stroke-width="1.5"/>
<circle cx="214" cy="494.2" r="1.5" fill="#ccc"/>
<path d="M214.3 495V478.5" stroke="#00c800" stroke-width="2"/><path d="M211.9 479.3l2.4-6.8 2.4 6.8z" fill="#00c800"/>
<path d="M214.5 495.3H233" stroke="#d8d000" stroke-width="1.7"/><path d="M232.6 493.2l8.4 2.1-8.4 2.1z" fill="#e0d800"/>
<text x="214.9" y="474" font-family="Liberation Serif" font-size="8.6" fill="#c8c8c8">Y</text>
<text x="240.6" y="495.7" font-family="Liberation Serif" font-size="8.6" fill="#c8c8c8">Z</text>
<text x="215.3" y="492.8" font-family="Liberation Serif" font-size="8.6" fill="#c8c8c8">X</text>
<path d="M3.5 46.0h1.6M3.5 48.8h1.6M3.5 51.5h1.6M3.5 54.3h1.6M3.5 57.1h1.6M3.5 59.9h1.6M3.5 62.6h1.6M3.5 65.4h1.6" stroke="#bcbcbc" stroke-width="1.2"/>
<path d="M9.5 42V69" stroke="#c8c8c8" stroke-width="1"/><path d="M10.5 42V69" stroke="#fcfcfc" stroke-width="1"/>
<path d="M13.4 46.0h1.6M13.4 48.8h1.6M13.4 51.5h1.6M13.4 54.3h1.6M13.4 57.1h1.6M13.4 59.9h1.6M13.4 62.6h1.6M13.4 65.4h1.6" stroke="#bcbcbc" stroke-width="1.2"/>
<path d="M21.8 64.5V48.3q0-1 1-1H28.6l2.2 2.7H39.8q1 0 1 1V64.5z" fill="#e3e6ec" stroke="#5f6f88" stroke-width="1.5" stroke-linejoin="round"/>
<path d="M21.8 52.8H40.8" stroke="#5f6f88" stroke-width="1.2"/>
<path d="M24.5 56.6h3.6" stroke="#4a90e2" stroke-width="1.5"/>
<path d="M48.6 64.5V47.2H61.8l3.3 3.3V64.5z" fill="#e3e6ec" stroke="#5f6f88" stroke-width="1.5" stroke-linejoin="round"/>
<path d="M51.6 47.2v5.2h9.4v-5.2M51.3 64.5v-7.4h10.8v7.4" fill="#f6f7f9" stroke="#5f6f88" stroke-width="1.2"/>
<rect x="57.8" y="48.5" width="1.8" height="2" fill="#4a90e2"/>
<path d="M72.5 45.5V65.5" stroke="#dedede" stroke-width="1"/>
<path d="M75.5 42V69" stroke="#c8c8c8" stroke-width="1"/><path d="M76.5 42V69" stroke="#fcfcfc" stroke-width="1"/>
<path d="M78.5 46.0h1.6M78.5 48.8h1.6M78.5 51.5h1.6M78.5 54.3h1.6M78.5 57.1h1.6M78.5 59.9h1.6M78.5 62.6h1.6M78.5 65.4h1.6" stroke="#bcbcbc" stroke-width="1.2"/>
<path d="M89.2 64.5V47.2H99.6l4.6 4.6V64.5z" fill="#e3e6ec" stroke="#5f6f88" stroke-width="1.5" stroke-linejoin="round"/>
<path d="M99.6 47.2v4.6h4.6" fill="#fff" stroke="#5f6f88" stroke-width="1.1" stroke-linejoin="round"/>
<path d="M93.3 56.8h6.6M96.6 53.5v6.6" stroke="#4a90e2" stroke-width="1.5"/>
<path d="M111.5 54.3h6.4l-3.2 3.4z" fill="#111"/>
<path d="M122.5 45.5V65.5" stroke="#dedede" stroke-width="1"/>
<rect x="127.5" y="53" width="1.6" height="6" fill="#4a90e2"/>
<path d="M388 47.6H406.7V60.8H388" fill="#f1f2f4" stroke="#74819a" stroke-width="1.05"/>
<path d="M396.7 60.8V63.9M392.4 63.9H400.9" stroke="#5f6f88" stroke-width="1.1"/>
<path d="M392.6 50.6L400.6 57.6M400.4 50.9L392.2 57.6" stroke="#4a90e2" stroke-width="1"/>
<circle cx="396.2" cy="54.4" r="1.9" fill="#8cc0f4" stroke="#3f7fd0" stroke-width="0.9"/>
<circle cx="392.6" cy="50.6" r="1.3" fill="#8cc0f4" stroke="#3f7fd0" stroke-width="0.9"/>
<circle cx="400.5" cy="50.9" r="1.3" fill="#8cc0f4" stroke="#3f7fd0" stroke-width="0.9"/>
<circle cx="392.2" cy="57.6" r="1.3" fill="#8cc0f4" stroke="#3f7fd0" stroke-width="0.9"/>
<circle cx="400.7" cy="57.6" r="1.3" fill="#8cc0f4" stroke="#3f7fd0" stroke-width="0.9"/>
<path d="M419.6 54.4l2.3-2.3 8.8 9.6-2.3 2.3z" fill="#7fb4f0" stroke="#5f6f88" stroke-width="1" stroke-linejoin="round"/>
<path d="M419.6 54.4l2.3-2.3 2 2.1-2.3 2.3z" fill="#fff" stroke="#5f6f88" stroke-width="1" stroke-linejoin="round"/>
<path d="M426.8 47.5L427.7 50.2L430.4 51.1L427.7 52.0L426.8 54.7L425.9 52.0L423.2 51.1L425.9 50.2z" fill="#f4ea98" stroke="#6a7488" stroke-width="0.6"/>
<path d="M417.5 46.4L418.1 48.5L420.2 49.1L418.1 49.7L417.5 51.8L416.9 49.7L414.8 49.1L416.9 48.5z" fill="#cfe0f4" stroke="#5c6c88" stroke-width="0.6"/>
<path d="M415.0 52.5L415.6 54.2L417.3 54.8L415.6 55.4L415.0 57.1L414.4 55.4L412.7 54.8L414.4 54.2z" fill="#8a78b0" stroke="#5a5078" stroke-width="0.6"/>
<path d="M417.1 58.1L417.7 60.2L419.8 60.8L417.7 61.4L417.1 63.5L416.5 61.4L414.4 60.8L416.5 60.2z" fill="#a6d8cc" stroke="#5c7c84" stroke-width="0.6"/>
<path d="M437.5 45.5V65.5" stroke="#dedede" stroke-width="1"/>
<path d="M441.5 42V69" stroke="#c8c8c8" stroke-width="1"/><path d="M442.5 42V69" stroke="#fcfcfc" stroke-width="1"/>
<path d="M444.6 46.0h1.6M444.6 48.8h1.6M444.6 51.5h1.6M444.6 54.3h1.6M444.6 57.1h1.6M444.6 59.9h1.6M444.6 62.6h1.6M444.6 65.4h1.6" stroke="#bcbcbc" stroke-width="1.2"/>
<path d="M460.5 47.6h3.2v6.5h6.9v3.2h-6.9v6.8h-3.2v-6.8h-6.9v-3.2h6.9z" fill="#e3e6ec" stroke="#7485a0" stroke-width="1.1" stroke-linejoin="round"/>
<path d="M487.7 53.5V50.9M484.4 59.6L482.2 61.4M491 59.6L493.2 61.4" stroke="#9a9a9a" stroke-width="1"/>
<circle cx="487.7" cy="57.5" r="4" fill="#dedede" stroke="#9a9a9a" stroke-width="1"/>
<path d="M485.9 57.5h3.6M487.7 55.7v3.6" stroke="#9a9a9a" stroke-width="0.9"/>
<circle cx="487.7" cy="48.7" r="2.1" fill="#fff" stroke="#9a9a9a" stroke-width="1"/>
<circle cx="480.7" cy="62.5" r="2.1" fill="#fff" stroke="#9a9a9a" stroke-width="1"/>
<circle cx="494.6" cy="62.5" r="2.1" fill="#fff" stroke="#9a9a9a" stroke-width="1"/>
<path d="M504.6 46.9h3.6v6.6h6.6v-6.6h3.6v16.6h-3.6v-6.8h-6.6v6.8h-3.6z" fill="#f4f6f9" stroke="#5f6f88" stroke-width="1.2" stroke-linejoin="round"/>
<circle cx="518" cy="60.3" r="4.3" fill="#8cc0f6" stroke="#4a90e2" stroke-width="1.1"/>
<path d="M515.8 60.3h4.4M518 58.1v4.4" stroke="#2f6fc4" stroke-width="1.1"/>
<circle cx="536.2" cy="52.8" r="6.5" fill="#d9d9d9" stroke="#a8a8a8" stroke-width="1.1"/>
<path d="M536.6 53.2L547.6 64.2M547.6 54.9L538.2 64.2" stroke="#8c8c8c" stroke-width="1.5"/>
<circle cx="558.6" cy="50.2" r="3.7" fill="#f6f6f6" stroke="#8e8e8e" stroke-width="0.9"/>
<text x="556.5" y="52.3" font-family="Liberation Sans" font-size="5.6" fill="#666">A</text>
<circle cx="568.6" cy="60" r="4.8" fill="#e4e4e4" stroke="#8e8e8e" stroke-width="1"/>
<text x="566" y="62.8" font-family="Liberation Sans" font-size="7.6" fill="#777">B</text>
<path d="M557.4 54.6Q557.6 59.2 562 59.8" fill="none" stroke="#777" stroke-width="1.1"/><path d="M560.8 57.9l2.6 2-3 1.2" fill="none" stroke="#777" stroke-width="1"/>
<path d="M579.5 45.5V65.5" stroke="#dedede" stroke-width="1"/>
<path d="M586.7 63.1L594 60.5L601.6 58.5M590.8 54.6L594 60.5" stroke="#8c8c8c" stroke-width="1" fill="none"/>
<path d="M593.6 59.6l1.2-3.4 5.3-9 2.3 1.4-5.3 9z" fill="#e6e6e6" stroke="#8c8c8c" stroke-width="0.9" stroke-linejoin="round"/>
<path d="M599.2 48.6l2.3 1.4" stroke="#8c8c8c" stroke-width="0.9"/>
<circle cx="586.7" cy="63.1" r="1.5" fill="#fff" stroke="#8c8c8c" stroke-width="0.9"/>
<circle cx="601.9" cy="58.4" r="2.4" fill="#fff" stroke="#8c8c8c" stroke-width="0.9"/>
<circle cx="590.7" cy="54.5" r="1.3" fill="#fff" stroke="#8c8c8c" stroke-width="0.9"/>
<rect x="611.8" y="58.9" width="5.6" height="5.2" fill="#fafafa" stroke="#b0b0b0" stroke-width="1.1"/>
<rect x="622.3" y="47.6" width="6.5" height="5.6" fill="#cfcfcf" stroke="#b0b0b0" stroke-width="1"/>
<path d="M618 58.3L621.5 54.6" stroke="#aaa" stroke-width="1" stroke-dasharray="1.2 1"/>
<rect x="637.3" y="47.7" width="3.8" height="16.4" fill="#ececec" stroke="#b0b0b0" stroke-width="1"/>
<rect x="642.6" y="60.7" width="11.6" height="3.4" fill="#d2d2d2" stroke="#b0b0b0" stroke-width="1"/>
<path d="M643.5 51.6Q649.5 50 650.8 55.6" fill="none" stroke="#8c8c8c" stroke-width="1.1"/><path d="M648.8 54.2l2.1 2 1.5-2.6" fill="none" stroke="#8c8c8c" stroke-width="1"/>
<path d="M669.8 48.4L663.3 63.8H669.8z" fill="#f2f2f2" stroke="#b0b0b0" stroke-width="1" stroke-linejoin="round"/>
<path d="M671.8 48.4L678.3 63.8H671.8z" fill="#cfcfcf" stroke="#b0b0b0" stroke-width="1" stroke-linejoin="round"/>
<path d="M670.8 47V65" stroke="#b8b8b8" stroke-width="1" stroke-dasharray="2 1"/>
<rect x="690.2" y="49.2" width="13.3" height="13.2" fill="#e3e6ec" stroke="#55637c" stroke-width="1.3"/>
<path d="M695.6 54.5l-2.4-2.4m0 1.8v-1.8h1.8M698.2 54.5l2.4-2.4m0 1.8v-1.8h-1.8M695.6 57.2l-2.4 2.4m0-1.8v1.8h1.8M698.2 57.2l2.4 2.4m0-1.8v1.8h-1.8" stroke="#55637c" stroke-width="0.8" fill="none"/>
<circle cx="690.2" cy="49.2" r="1.9" fill="#b9d8fa" stroke="#4a90e2" stroke-width="0.9"/>
<circle cx="703.5" cy="49.2" r="1.9" fill="#b9d8fa" stroke="#4a90e2" stroke-width="0.9"/>
<circle cx="690.2" cy="62.4" r="1.9" fill="#b9d8fa" stroke="#4a90e2" stroke-width="0.9"/>
<circle cx="703.5" cy="62.4" r="1.9" fill="#b9d8fa" stroke="#4a90e2" stroke-width="0.9"/>
<text x="720.3" y="53.3" font-family="Liberation Sans" font-style="italic" font-size="8.4" fill="#4c5a70">A</text><text x="713" y="64" font-family="Liberation Sans" font-style="italic" font-size="8.4" fill="#4c5a70">B</text><text x="725" y="64" font-family="Liberation Sans" font-style="italic" font-size="8.4" fill="#4c5a70">C</text>
<path d="M718.6 50.2Q716 52 716 55.2M727.2 50.2Q730 52 729.6 55.6M720 61H724.4" fill="none" stroke="#4a90e2" stroke-width="1.2" stroke-dasharray="3 0.8"/>
<text x="745.6" y="53.3" font-family="Liberation Sans" font-style="italic" font-size="8.4" fill="#4c5a70">X</text><text x="738.2" y="64.4" font-family="Liberation Sans" font-style="italic" font-size="8.4" fill="#4c5a70">Y</text><text x="750.6" y="64.4" font-family="Liberation Sans" font-style="italic" font-size="8.4" fill="#4c5a70">Z</text>
<path d="M743.8 50.2Q741 52 741 55.2M752.4 50.2Q755.2 52 754.8 55.6M745 61H749.6" fill="none" stroke="#4a90e2" stroke-width="1.2" stroke-dasharray="3 0.8"/>
<path d="M762.8 45.5V65.5" stroke="#dedede" stroke-width="1"/>
<rect x="769.6" y="47.6" width="17.2" height="16.2" fill="#e3e6ec" stroke="#5f6f88" stroke-width="1.2" stroke-dasharray="4.2 1.6"/>
<path d="M774.6 51.2L778.1 55.8L782.6 53.2M774.2 60.2L778.1 55.8L782.6 59.6" stroke="#4a90e2" stroke-width="1" fill="none"/>
<circle cx="778.1" cy="55.8" r="2.1" fill="#b9d8fa" stroke="#4a90e2" stroke-width="0.9"/>
<circle cx="774.6" cy="51.2" r="1.2" fill="#b9d8fa" stroke="#4a90e2" stroke-width="0.9"/>
<circle cx="782.6" cy="53.2" r="1.2" fill="#b9d8fa" stroke="#4a90e2" stroke-width="0.9"/>
<circle cx="774.2" cy="60.2" r="1.2" fill="#b9d8fa" stroke="#4a90e2" stroke-width="0.9"/>
<circle cx="782.6" cy="59.6" r="1.2" fill="#b9d8fa" stroke="#4a90e2" stroke-width="0.9"/>
<path d="M793.1 54.1h6.4l-3.2 3.4z" fill="#111"/>
<rect x="805.5" y="47.6" width="17.2" height="16.2" fill="#e3e6ec" stroke="#5f6f88" stroke-width="1.2" stroke-dasharray="4.2 1.6"/>
<path d="M808.8 50.8H819.6M808.8 60.6H819.6" stroke="#5f6f88" stroke-width="1.7"/>
<rect x="810.2" y="53.6" width="8" height="4" fill="#9cc6f4" stroke="#4d7fc0" stroke-width="1"/>
<path d="M828.9 54.1h6.4l-3.2 3.4z" fill="#111"/>
<path d="M843.4 54.0l2 2-2 2M846.6 54.0l2 2-2 2" stroke="#222" stroke-width="1.2" fill="none"/>
<path d="M852.5 42V69" stroke="#c8c8c8" stroke-width="1"/><path d="M853.5 42V69" stroke="#fcfcfc" stroke-width="1"/>
<path d="M855.8 46.0h1.6M855.8 48.8h1.6M855.8 51.5h1.6M855.8 54.3h1.6M855.8 57.1h1.6M855.8 59.9h1.6M855.8 62.6h1.6M855.8 65.4h1.6" stroke="#bcbcbc" stroke-width="1.2"/>
<path d="M864.8 47.2H874.1V50.4H868.2V54.3H874.1V57.2H868.2V64.3H864.8z" fill="#b6b6b6"/>
<text x="869" y="64" font-family="Liberation Sans" font-style="italic" font-size="8.2" fill="#a4a4a4" textLength="13" lengthAdjust="spacingAndGlyphs">orce</text>
<path d="M888.6 54.3h6.4l-3.2 3.4z" fill="#6a6a6a"/>
<path d="M897.5 42V69" stroke="#c8c8c8" stroke-width="1"/><path d="M898.5 42V69" stroke="#fcfcfc" stroke-width="1"/>
<path d="M901.5 46.0h1.6M901.5 48.8h1.6M901.5 51.5h1.6M901.5 54.3h1.6M901.5 57.1h1.6M901.5 59.9h1.6M901.5 62.6h1.6M901.5 65.4h1.6" stroke="#bcbcbc" stroke-width="1.2"/>
<path d="M916.4 49.4L925 53L924.5 61.1H913.5z" fill="none" stroke="#3c4a60" stroke-width="1"/>
<circle cx="916.4" cy="49.4" r="2" fill="#a9d0f8" stroke="#3f82d6" stroke-width="1"/>
<circle cx="925" cy="53" r="2" fill="#a9d0f8" stroke="#3f82d6" stroke-width="1"/>
<circle cx="913.5" cy="60.7" r="3" fill="#a9d0f8" stroke="#3f82d6" stroke-width="1"/>
<circle cx="924.5" cy="61.1" r="2.4" fill="#a9d0f8" stroke="#3f82d6" stroke-width="1"/>
<path d="M934.6 54.0l2 2-2 2M937.8 54.0l2 2-2 2" stroke="#222" stroke-width="1.2" fill="none"/>
<path d="M943.5 42V69" stroke="#c8c8c8" stroke-width="1"/><path d="M944.5 42V69" stroke="#fcfcfc" stroke-width="1"/>
<path d="M946.9 46.0h1.6M946.9 48.8h1.6M946.9 51.5h1.6M946.9 54.3h1.6M946.9 57.1h1.6M946.9 59.9h1.6M946.9 62.6h1.6M946.9 65.4h1.6" stroke="#bcbcbc" stroke-width="1.2"/>
<path d="M955.2 47.9V57.6M973.9 47.9V57.6" stroke="#6b7a92" stroke-width="1.1"/>
<path d="M957 52.7H972.2M959.4 50.4l-2.6 2.3 2.6 2.3M969.8 50.4l2.6 2.3-2.6 2.3" stroke="#5aa0ee" stroke-width="1.2" fill="none"/>
<path d="M957.7 60.7H971.3" stroke="#6b7a92" stroke-width="1.2"/>
<circle cx="957.7" cy="60.7" r="2.1" fill="#a9d0f8" stroke="#3f82d6" stroke-width="1"/>
<circle cx="971.3" cy="60.7" r="2.1" fill="#a9d0f8" stroke="#3f82d6" stroke-width="1"/>
<path d="M979.9 54.0l2 2-2 2M983.1 54.0l2 2-2 2" stroke="#222" stroke-width="1.2" fill="none"/>
<rect x="5.2" y="4.4" width="10.2" height="10.2" fill="#0a5cad"/><path d="M9.62 8.31h5.78v2.04h-3.74v4.25h-2.04z" fill="#fff"/><circle cx="10.30" cy="10.01" r="1.61" fill="#fff"/>
<path d="M844 6.6H853.2V12.8H846.6L844 14.8z" fill="none" stroke="#222" stroke-width="1"/><path d="M845.8 8.8H851.4M845.8 10.7H849.8" stroke="#222" stroke-width="0.9"/>
<circle cx="879.6" cy="10.3" r="4.7" fill="#fff" stroke="#c4c4c4" stroke-width="1.1"/><path d="M875.5 12.4Q879.6 8.2 883.7 12.4A4.6 4.6 0 0 1 875.5 12.4z" fill="#cdcdcd"/><circle cx="879.6" cy="8.5" r="2.1" fill="#fff" stroke="#c4c4c4" stroke-width="1"/>
<path d="M908 12.3H913" stroke="#000" stroke-width="1.7"/>
<rect x="938.6" y="7.6" width="5.6" height="5.4" fill="none" stroke="#000" stroke-width="1"/><path d="M938.1 7.4H944.7" stroke="#000" stroke-width="1.5"/>
<path d="M970 7.8L975.2 12.9M975.2 7.8L970 12.9" stroke="#000" stroke-width="1.3"/>
<rect x="953.7" y="22.9" width="10.6" height="11.2" rx="1" fill="#fcfcfc" stroke="#e4e4e4" stroke-width="1"/>
<rect x="966" y="22.9" width="11.2" height="11.2" rx="1" fill="#fcfcfc" stroke="#e4e4e4" stroke-width="1"/>
<rect x="979" y="22.9" width="10.5" height="11.2" rx="1" fill="#fcfcfc" stroke="#e4e4e4" stroke-width="1"/>
<path d="M957.4 30.6H961.2" stroke="#5a6e8c" stroke-width="1.3"/>
<path d="M970.6 27H975.2V29.6M969.2 28.4H973.6V31.2H969.2z" fill="none" stroke="#5a6e8c" stroke-width="1"/>
<path d="M982.2 26.2L986.8 30.9M986.8 26.2L982.2 30.9" stroke="#5a6e8c" stroke-width="1.3"/>
<rect x="4.3" y="89.2" width="12.2" height="12.2" fill="#0a5cad"/><path d="M9.59 93.88h6.91v2.44h-4.47v5.08h-2.44z" fill="#fff"/><circle cx="10.40" cy="95.91" r="1.93" fill="#fff"/>
<path d="M23.3 117.5V106.0H29.7l2.6 2.6V117.5z" fill="#f4f6f8" stroke="#5f6f88" stroke-width="1"/><rect x="20.9" y="109.4" width="13.4" height="6.6" rx="2" fill="#3a8ee8"/><text x="22.3" y="114.7" font-family="Liberation Sans" font-weight="bold" font-size="5.6" fill="#fff" textLength="10.6" lengthAdjust="spacingAndGlyphs">hzw</text>
<path d="M23.3 134.0V122.5H29.7l2.6 2.6V134.0z" fill="#f4f6f8" stroke="#5f6f88" stroke-width="1"/><rect x="20.9" y="125.9" width="13.4" height="6.6" rx="2" fill="#3a8ee8"/><text x="22.3" y="131.2" font-family="Liberation Sans" font-weight="bold" font-size="5.6" fill="#fff" textLength="10.6" lengthAdjust="spacingAndGlyphs">hzw</text>
<path d="M23.3 150.6V139.1H29.7l2.6 2.6V150.6z" fill="#f4f6f8" stroke="#5f6f88" stroke-width="1"/><rect x="20.9" y="142.5" width="13.4" height="6.6" rx="2" fill="#3a8ee8"/><text x="22.3" y="147.8" font-family="Liberation Sans" font-weight="bold" font-size="5.6" fill="#fff" textLength="10.6" lengthAdjust="spacingAndGlyphs">hzw</text>
<path d="M160.0 374.6h3.8v2.6M158.2 376.6h3.8v3h-3.8z" fill="none" stroke="#111" stroke-width="1.2"/><path d="M170.0 375.2l4.8 4.8m0-4.8l-4.8 4.8" stroke="#111" stroke-width="1.5"/>
<path d="M970.4 530.5h3.8v2.6M968.6 532.5h3.8v3h-3.8z" fill="none" stroke="#111" stroke-width="1.2"/><path d="M980.4 531.1l4.8 4.8m0-4.8l-4.8 4.8" stroke="#111" stroke-width="1.5"/>
<path d="M168.6 392h4.6l-2.3 2.6z" fill="#9a9a9a"/>
<path d="M886.2 542.4V564M937.9 542.4V564" stroke="#b8b8b8" stroke-width="1"/>
<rect x="890" y="546.3" width="13.2" height="13.4" rx="2" fill="#f5f5f5"/>
<rect x="906.3" y="546.3" width="13.2" height="13.4" rx="2" fill="#f5f5f5"/>
<rect x="923.1" y="546.3" width="13.2" height="13.4" rx="2" fill="#f5f5f5"/>
<rect x="941" y="546.3" width="13.2" height="13.4" rx="2" fill="#fcfcfc"/>
<rect x="957.8" y="546.3" width="13.2" height="13.4" rx="2" fill="#f5f5f5"/>
<rect x="974.1" y="546.3" width="13.2" height="13.4" rx="2" fill="#fcfcfc"/>
<path d="M891.6 553.6Q893 558.8 898 557.6Q902.6 556 901.4 551.4Q899.6 547.6 895.8 549Q893.4 550.6 894.6 553Q896.4 555 898.2 553.4Q898.8 551.8 897.2 551.6" fill="none" stroke="#acacac" stroke-width="2.3" stroke-linecap="round"/>
<rect x="908" y="548.2" width="6.4" height="5.8" fill="#bdbdbd" stroke="#a4a4a4" stroke-width="0.8"/><rect x="911.4" y="552" width="6.2" height="6" fill="#a9a9a9" stroke="#999" stroke-width="0.8"/>
<path d="M909 556.8h2.2M916.4 548.6v2.4" stroke="#a4a4a4" stroke-width="1"/>
<path d="M924.6 558.2h4.4v-4.6h3v-4.6h3.4" fill="none" stroke="#9a9a9a" stroke-width="2.2"/><path d="M924.4 558.6h6M929.6 549h5.8" stroke="#8a8a8a" stroke-width="1"/>
<path d="M946.47 548.70L946.77 546.99L948.83 546.99L949.13 548.70L949.90 549.02L951.32 548.02L952.78 549.48L951.78 550.90L952.10 551.67L953.81 551.97L953.81 554.03L952.10 554.33L951.78 555.10L952.78 556.52L951.32 557.98L949.90 556.98L949.13 557.30L948.83 559.01L946.77 559.01L946.47 557.30L945.70 556.98L944.28 557.98L942.82 556.52L943.82 555.10L943.50 554.33L941.79 554.03L941.79 551.97L943.50 551.67L943.82 550.90L942.82 549.48L944.28 548.02L945.70 549.02z" fill="#fbfbfd" stroke="#4e6080" stroke-width="1.25" stroke-linejoin="round"/>
<circle cx="947.8" cy="553.0" r="2.3" fill="#fff" stroke="#4e6080" stroke-width="1.2"/>
<rect x="958.8" y="548" width="10.6" height="3.4" rx="0.8" fill="#e2e2e2" stroke="#a4a4a4" stroke-width="0.9"/><rect x="958.8" y="553.8" width="7" height="3.6" rx="0.8" fill="#e2e2e2" stroke="#a4a4a4" stroke-width="0.9"/>
<circle cx="967.6" cy="556.2" r="3.3" fill="#ececec" stroke="#a4a4a4" stroke-width="0.9"/><path d="M967.6 554.4v1.9h1.5" stroke="#a4a4a4" stroke-width="0.8" fill="none"/>
<path d="M976 552.6Q976.4 549.2 980 549.2H985.4M983.4 547l2.6 2.2-2.6 2.2" fill="none" stroke="#55688a" stroke-width="1.4"/>
<path d="M985.8 553.6Q985.4 557 981.8 557H976.4M978.4 554.8l-2.6 2.2 2.6 2.2" fill="none" stroke="#55688a" stroke-width="1.4"/>
<path d="M985.5 706.2h1.6M982.6 709h1.6M985.5 709h1.6M979.8 711.7h1.6M982.6 711.7h1.6M985.5 711.7h1.6" stroke="#c6c6c6" stroke-width="1.5"/>
</svg>
<div class="a" style="left:131px;top:39px;width:100px;height:54px;background:#f0f0f0;border:1px solid #f0f0f0;box-shadow:1.5px 1.5px 3px rgba(0,0,0,0.45)"></div>
<div class="a" style="left:133px;top:40.5px;width:97.5px;height:16.5px;background:#91c9f7"></div>
<div class="a" style="left:152px;top:57.5px;width:1px;height:34px;background:#e6e6e6"></div>
<div class="t" style="left:154.80px;top:42.60px;font-size:11.30px;letter-spacing:-0.391px;color:#000;">DS-PAW</div>
<div class="t" style="left:154.80px;top:60.60px;font-size:11.30px;letter-spacing:-1.500px;color:#000;">BDF</div>
<div class="t" style="left:154.80px;top:78.60px;font-size:11.30px;letter-spacing:0.153px;color:#000;">MOMAP</div>
<div class="a" style="left:232px;top:41px;width:156px;height:108px;background:#f0f0f0;border:1px solid #f0f0f0;box-shadow:1.5px 1.5px 3px rgba(0,0,0,0.45)"></div>
<div class="a" style="left:233.5px;top:42.4px;width:152px;height:16px;background:#91c9f7"></div>
<div class="a" style="left:253.5px;top:59px;width:1px;height:89px;background:#e6e6e6"></div>
<div class="a" style="left:254px;top:128.2px;width:131px;height:1px;background:#d8d8d8"></div>
<div class="t" style="left:256.39px;top:45.60px;font-size:11.30px;letter-spacing:0.154px;color:#000;">Structure Optimization</div>
<div class="t" style="left:256.00px;top:61.60px;font-size:11.30px;letter-spacing:0.082px;color:#000;">Electronic Structure</div>
<div class="t" style="left:256.00px;top:78.60px;font-size:11.30px;letter-spacing:-1.176px;color:#000;">NEB</div>
<div class="t" style="left:256.90px;top:94.60px;font-size:11.30px;letter-spacing:0.053px;color:#000;">AIMD</div>
<div class="t" style="left:256.90px;top:111.60px;font-size:11.30px;letter-spacing:0.246px;color:#000;">Vibration</div>
<div class="t" style="left:256.90px;top:134.60px;font-size:11.30px;letter-spacing:-0.186px;color:#000;">Analysis Plot</div>
<svg width="991" height="715" viewBox="0 0 991 715">
<path d="M222.2 46.3v5l2.7-2.5z" fill="#111"/>
<path d="M222.2 63.1v5l2.7-2.5z" fill="#111"/>
<path d="M222.2 80.7v5l2.7-2.5z" fill="#111"/>
<rect x="134.3" y="59.6" width="11.5" height="11.2" fill="#164ca6"/>
<text x="134.9" y="68.6" font-family="Liberation Sans" font-size="9" fill="#e8eefc" textLength="10.4" lengthAdjust="spacingAndGlyphs">BDF</text>
<rect x="133.3" y="75.6" width="13.6" height="14.8" fill="#fbfbfb"/>
<polygon points="140.0,90.4 134.0,87.0 134.0,80.0 140.0,76.6 146.0,80.0 146.0,87.0" fill="none" stroke="#784888" stroke-width="1.3"/>
<circle cx="140" cy="83.5" r="3.3" fill="none" stroke="#9468a6" stroke-width="1.2"/>
<rect x="134.9" y="39.9" width="72.4" height="16.8" fill="none" stroke="#e8202e" stroke-width="1.4"/>
<rect x="242.7" y="43.9" width="133.6" height="16" fill="none" stroke="#e8202e" stroke-width="1.4"/>
</svg>
</body></html>
